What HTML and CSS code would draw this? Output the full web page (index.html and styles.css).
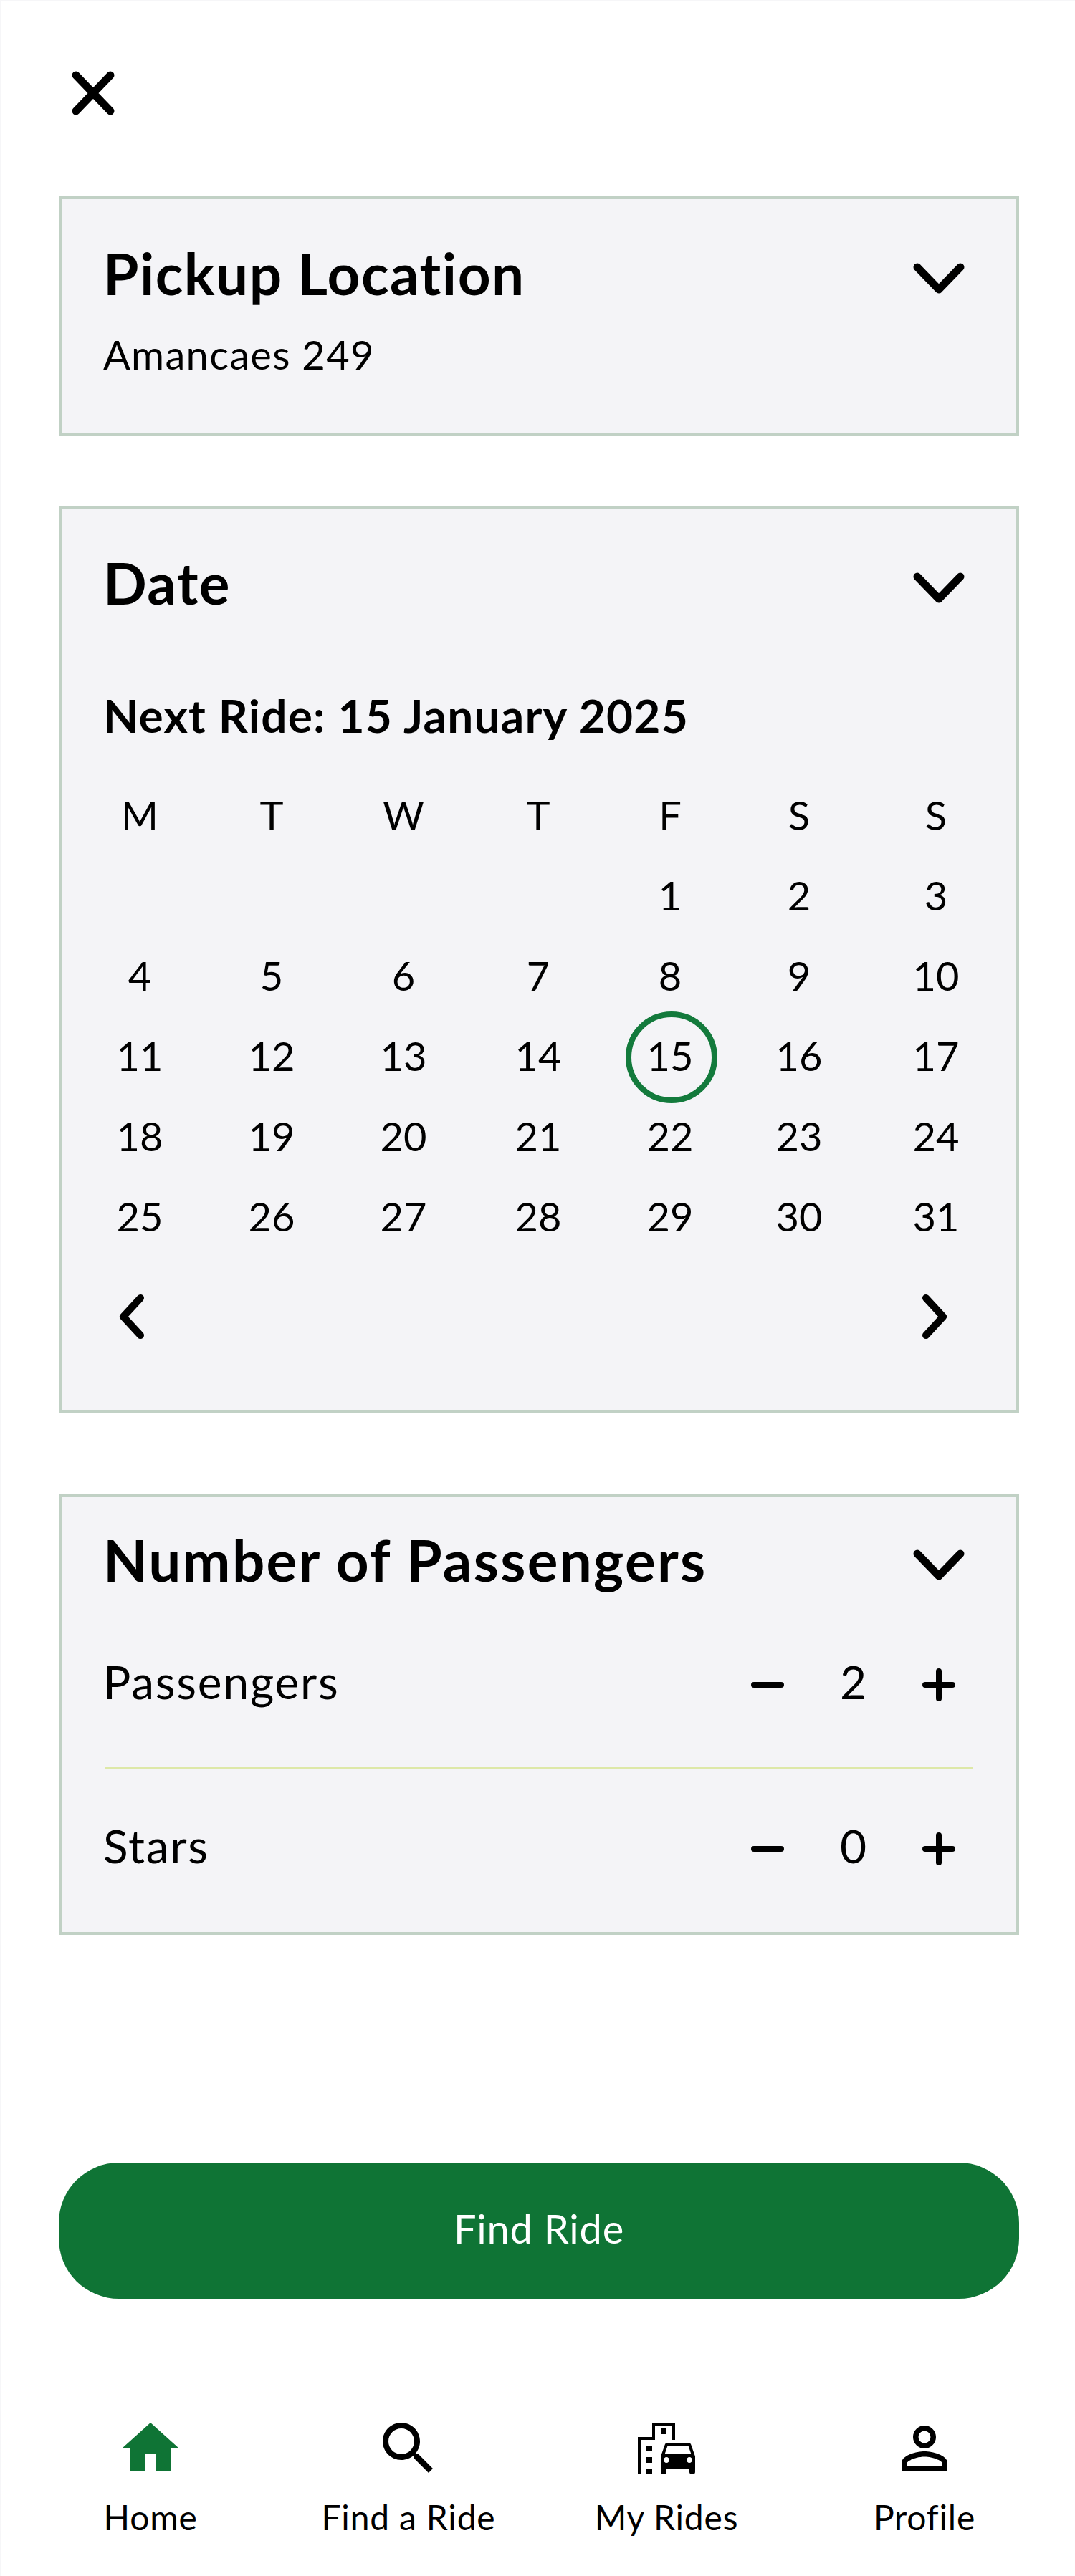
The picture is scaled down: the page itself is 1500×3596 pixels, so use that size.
FILE: index.html
```html
<!DOCTYPE html>
<html lang="en">

<head>
    <meta charset="UTF-8">
    <meta name="viewport" content="width=device-width, initial-scale=1.0">
    <title>Find Ride</title>
    <link rel="stylesheet" href="styles.css">
</head>

<body>
    <div class="screen">
        <div class="top-bar">
            <svg class="close-icon" viewBox="0 0 60 62"><path d="M6 6 54 56M54 6 6 56" /></svg>
        </div>

        <section class="card">
            <div class="card-head">
                <h2>Pickup Location</h2>
                <svg class="chevron-down" viewBox="0 0 72 44"><path d="M6 6 36 37 66 6" /></svg>
            </div>
            <p class="address">Amancaes 249</p>
        </section>

        <section class="card date-card">
            <div class="card-head">
                <h2>Date</h2>
                <svg class="chevron-down" viewBox="0 0 72 44"><path d="M6 6 36 37 66 6" /></svg>
            </div>
            <p class="next-ride">Next Ride: 15 January 2025</p>
            <div class="calendar">
                <span>M</span><span>T</span><span>W</span><span>T</span><span>F</span><span>S</span><span>S</span>
                <span></span><span></span><span></span><span></span><span>1</span><span>2</span><span>3</span>
                <span>4</span><span>5</span><span>6</span><span>7</span><span>8</span><span>9</span><span>10</span>
                <span>11</span><span>12</span><span>13</span><span>14</span><span class="selected">15</span><span>16</span><span>17</span>
                <span>18</span><span>19</span><span>20</span><span>21</span><span>22</span><span>23</span><span>24</span>
                <span>25</span><span>26</span><span>27</span><span>28</span><span>29</span><span>30</span><span>31</span>
            </div>
            <div class="month-nav">
                <svg class="month-arrow" viewBox="0 0 36 62"><path d="M30 5 6 31 30 57" /></svg>
                <svg class="month-arrow" viewBox="0 0 36 62"><path d="M6 5 30 31 6 57" /></svg>
            </div>
        </section>

        <section class="card passengers-card">
            <div class="card-head">
                <h2>Number of Passengers</h2>
                <svg class="chevron-down" viewBox="0 0 72 44"><path d="M6 6 36 37 66 6" /></svg>
            </div>
            <div class="count-row first-row">
                <span class="count-label">Passengers</span>
                <div class="counter">
                    <svg class="count-icon" viewBox="0 0 46 46"><path d="M4 23H42" /></svg>
                    <span class="count-value">2</span>
                    <svg class="count-icon" viewBox="0 0 46 46"><path d="M4 23H42M23 4V42" /></svg>
                </div>
            </div>
            <div class="count-row">
                <span class="count-label">Stars</span>
                <div class="counter">
                    <svg class="count-icon" viewBox="0 0 46 46"><path d="M4 23H42" /></svg>
                    <span class="count-value">0</span>
                    <svg class="count-icon" viewBox="0 0 46 46"><path d="M4 23H42M23 4V42" /></svg>
                </div>
            </div>
        </section>

        <button class="find-button" type="button">Find Ride</button>

        <nav class="bottom-nav">
            <a class="nav-item active">
                <svg viewBox="0 0 24 24"><path d="M10 20v-6h4v6h5v-8h3L12 3 2 12h3v8z" /></svg>
                <span>Home</span>
            </a>
            <a class="nav-item">
                <svg viewBox="0 0 24 24"><path d="M15.5 14h-.79l-.28-.27C15.41 12.59 16 11.11 16 9.5 16 5.91 13.09 3 9.5 3S3 5.91 3 9.5 5.91 16 9.5 16c1.61 0 3.09-.59 4.23-1.57l.27.28v.79l5 4.99L20.49 19l-4.99-5zm-6 0C7.01 14 5 11.99 5 9.5S7.01 5 9.5 5 14 7.01 14 9.5 11.99 14 9.5 14z" /></svg>
                <span>Find a Ride</span>
            </a>
            <a class="nav-item">
                <svg viewBox="0 0 24 24">
                    <path d="M20.57 10.66C20.43 10.26 20.05 10 19.6 10h-7.19c-.46 0-.83.26-.98.66L10 14.77l.01 5.51c0 .38.31.72.69.72h.62c.38 0 .68-.38.68-.76V19h8v1.24c0 .38.31.76.69.76h.61c.38 0 .69-.34.69-.72l.01-1.37v-4.14l-1.43-4.11zM12.41 11h7.19l1.03 3h-9.25l1.03-3zM12 17c-.55 0-1-.45-1-1s.45-1 1-1 1 .45 1 1-.45 1-1 1zm8 0c-.55 0-1-.45-1-1s.45-1 1-1 1 .45 1 1-.45 1-1 1z" />
                    <path d="M14 9h1V3H7v5H2v13h1V9h5V4h6z" />
                    <path d="M5 11h2v2H5zM10 5h2v2h-2zM5 15h2v2H5zM5 19h2v2H5z" />
                </svg>
                <span>My Rides</span>
            </a>
            <a class="nav-item">
                <svg viewBox="0 0 24 24"><path d="M12 5.9c1.16 0 2.1.94 2.1 2.1s-.94 2.1-2.1 2.1S9.9 9.16 9.9 8s.94-2.1 2.1-2.1m0 9c2.97 0 6.1 1.46 6.1 2.1v1.1H5.9V17c0-.64 3.13-2.1 6.1-2.1M12 4C9.79 4 8 5.79 8 8s1.79 4 4 4 4-1.79 4-4-1.79-4-4-4zm0 9c-2.67 0-8 1.34-8 4v3h16v-3c0-2.66-5.33-4-8-4z" /></svg>
                <span>Profile</span>
            </a>
        </nav>
    </div>
</body>

</html>
```

FILE: styles.css
```css
* {
    box-sizing: border-box;
}

body {
    margin: 0;
    font-family: "Lato", "Noto Sans", sans-serif;
    font-variant-ligatures: none;
    color: #000;
    background: #fff;
}

.screen {
    width: 1500px;
    height: 3596px;
    overflow: hidden;
    border-top: 2px solid #f6f6f8;
    border-left: 2px solid #f6f6f8;
}

.top-bar {
    padding: 97px 0 0 98px;
    height: 272px;
}

.close-icon {
    display: block;
    width: 60px;
    height: 62px;
}

.close-icon path,
.chevron-down path,
.month-arrow path,
.count-icon path {
    fill: none;
    stroke: #000;
    stroke-linecap: round;
    stroke-linejoin: round;
}

.close-icon path {
    stroke-width: 11;
}

.card {
    width: 1340px;
    margin-left: 80px;
    padding: 40px 60px 0;
    background: #f4f4f7;
    border: 4px solid #c1d1c5;
}

.card-head {
    display: flex;
    justify-content: space-between;
    align-items: center;
    height: 126px;
}

.card-head h2 {
    margin: 0 0 0 -2px;
    font-size: 80px;
    font-weight: 700;
    line-height: 126px;
    letter-spacing: 1.5px;
}

.chevron-down {
    width: 72px;
    height: 44px;
    margin: 16px 12px 0 0;
}

.chevron-down path {
    stroke-width: 11;
}

.address {
    margin: 0 0 0 -2px;
    height: 161px;
    padding-top: 13px;
    font-size: 56px;
    line-height: 76px;
    letter-spacing: 1.3px;
}

.date-card {
    height: 1267px;
    margin-top: 97px;
}

.next-ride {
    margin: 0 0 0 -2px;
    padding-top: 79px;
    height: 205px;
    font-size: 64px;
    font-weight: 700;
    line-height: 88px;
    letter-spacing: 1.2px;
}

.calendar {
    display: grid;
    grid-template-columns: 186px 182px 186px 190px 178px 182px 200px;
    grid-auto-rows: 112px;
    place-items: center;
    margin: 0 -44px;
    font-size: 56px;
}

.selected {
    display: flex;
    align-items: center;
    justify-content: center;
    width: 128px;
    height: 128px;
    margin: 6px 0 0 4px;
    padding: 0 4px 6px 0;
    border: 8px solid #137a3c;
    border-radius: 50%;
}

.month-nav {
    display: flex;
    justify-content: space-between;
    margin: 54px 36px 0 20px;
}

.month-arrow {
    width: 36px;
    height: 62px;
}

.month-arrow path {
    stroke-width: 10;
}

.passengers-card {
    height: 615px;
    margin-top: 113px;
    padding-top: 24px;
}

.passengers-card h2 {
    letter-spacing: 2.3px;
}

.count-row {
    display: flex;
    justify-content: space-between;
    align-items: center;
    height: 212px;
    padding-right: 25px;
    font-size: 64px;
}

.count-label {
    margin-left: -2px;
    letter-spacing: 1.8px;
}

.first-row {
    height: 230px;
    padding-bottom: 12px;
    border-bottom: 4px solid #dde8a8;
}

.counter {
    display: grid;
    grid-template-columns: 46px 1fr 46px;
    align-items: center;
    justify-items: center;
    width: 285px;
}

.count-icon {
    width: 46px;
    height: 46px;
    margin-top: 10px;
}

.count-icon path {
    stroke-width: 8;
}

.find-button {
    display: block;
    width: 1340px;
    height: 190px;
    margin: 318px 0 0 80px;
    padding: 0 0 8px;
    border: none;
    border-radius: 84px;
    background: #0f7435;
    color: #fff;
    font-family: inherit;
    font-size: 56px;
    letter-spacing: 0.8px;
}

.bottom-nav {
    display: grid;
    grid-template-columns: repeat(4, 360px);
    margin: 161px 0 0 28px;
}

.nav-item {
    display: flex;
    flex-direction: column;
    align-items: center;
    gap: 15px;
    font-size: 48px;
    line-height: 65px;
    letter-spacing: 0.8px;
}

.nav-item svg {
    width: 96px;
    height: 96px;
}

.nav-item.active svg {
    fill: #0f7435;
}
```
